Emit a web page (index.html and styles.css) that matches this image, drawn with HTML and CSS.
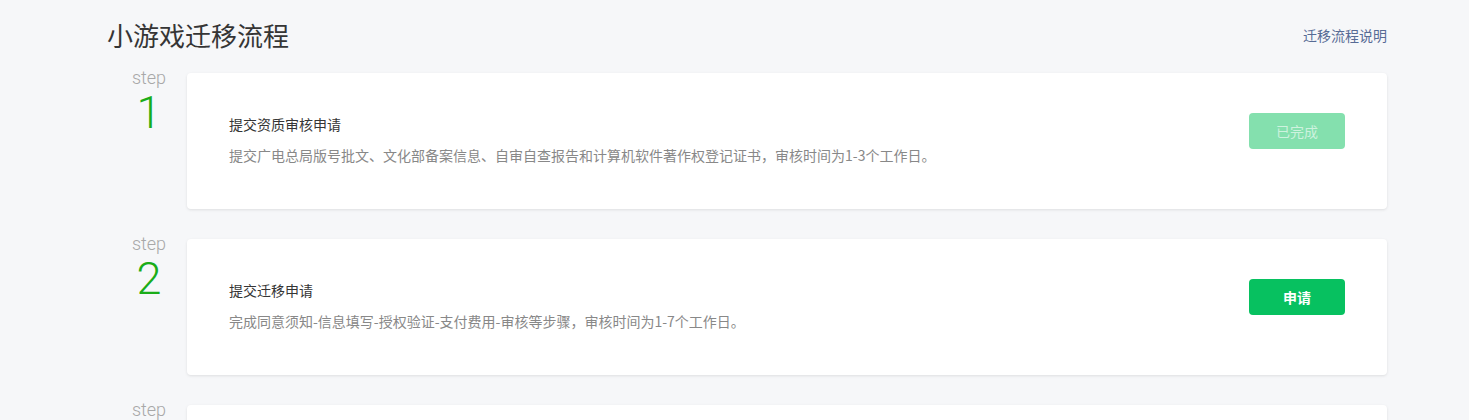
FILE: index.html
```html
<!DOCTYPE html>
<html lang="zh-CN">
<head>
<meta charset="utf-8">
<title>小游戏迁移流程</title>
<link rel="stylesheet" href="styles.css">
</head>
<body>
<div class="page">
  <div class="header">
    <h1 class="title">小游戏迁移流程</h1>
    <a class="help-link" href="#">迁移流程说明</a>
  </div>
  <div class="steps">
    <div class="step">
      <div class="step-index">
        <div class="step-label">step</div>
        <div class="step-num">1</div>
      </div>
      <div class="card">
        <div class="card-body">
          <div class="card-title">提交资质审核申请</div>
          <div class="card-desc">提交广电总局版号批文、文化部备案信息、自审自查报告和计算机软件著作权登记证书，审核时间为1-3个工作日。</div>
        </div>
        <button class="btn btn-done">已完成</button>
      </div>
    </div>
    <div class="step">
      <div class="step-index">
        <div class="step-label">step</div>
        <div class="step-num">2</div>
      </div>
      <div class="card">
        <div class="card-body">
          <div class="card-title">提交迁移申请</div>
          <div class="card-desc">完成同意须知-信息填写-授权验证-支付费用-审核等步骤，审核时间为1-7个工作日。</div>
        </div>
        <button class="btn btn-primary">申请</button>
      </div>
    </div>
    <div class="step">
      <div class="step-index">
        <div class="step-label">step</div>
        <div class="step-num">3</div>
      </div>
      <div class="card">
        <div class="card-body">
          <div class="card-title">完成迁移</div>
          <div class="card-desc">审核通过后，小游戏将完成迁移。</div>
        </div>
        <button class="btn btn-primary">查看</button>
      </div>
    </div>
  </div>
</div>
</body>
</html>
```

FILE: styles.css
```css
html, body {
  margin: 0;
  padding: 0;
  background: #f6f7f9;
}
body {
  font-family: "Noto Sans CJK SC", "Liberation Sans", sans-serif;
  color: #353535;
}
.page {
  width: 1280px;
  margin-left: 107px;
}
.header {
  display: flex;
  align-items: center;
  justify-content: space-between;
  height: 30px;
  padding-top: 20px;
  margin-bottom: 23px;
}
.title {
  margin: 0;
  font-size: 26px;
  font-weight: 400;
  line-height: 30px;
  color: #353535;
}
.help-link {
  font-size: 14px;
  line-height: 30px;
  color: #576b95;
  text-decoration: none;
}
.steps {
  display: flex;
  flex-direction: column;
  gap: 30px;
}
.step {
  display: flex;
  align-items: flex-start;
}
.step-index {
  width: 80px;
  padding-left: 4px;
  box-sizing: border-box;
  margin-top: -5px;
  text-align: center;
  font-family: "Roboto", "Liberation Sans", sans-serif;
  font-weight: 300;
}
.step-label {
  font-size: 18px;
  line-height: 20px;
  color: #a8a8a8;
}
.step-num {
  font-size: 45px;
  line-height: 50px;
  color: #1aad19;
}
.card {
  flex: 1;
  display: flex;
  align-items: flex-start;
  justify-content: space-between;
  background: #fff;
  border-radius: 4px;
  box-shadow: 0 1px 3px rgba(0, 0, 0, 0.1);
  padding: 40px 42px;
}
.card-title {
  margin-top: -1px;
  font-size: 14px;
  line-height: 24px;
  color: #353535;
}
.card-desc {
  margin-top: 7px;
  font-size: 14px;
  line-height: 24px;
  color: #888;
}
.card-body {
  padding-bottom: 2px;
}
.btn {
  width: 96px;
  height: 36px;
  border: 0;
  border-radius: 4px;
  font-family: "Noto Sans CJK SC", sans-serif;
  font-size: 14px;
  cursor: pointer;
  padding: 0;
}
.btn-primary {
  background: #07c160;
  color: #fff;
  font-weight: 700;
}
.btn-done {
  background: #84e0ae;
  color: rgba(255, 255, 255, 0.6);
}
```
